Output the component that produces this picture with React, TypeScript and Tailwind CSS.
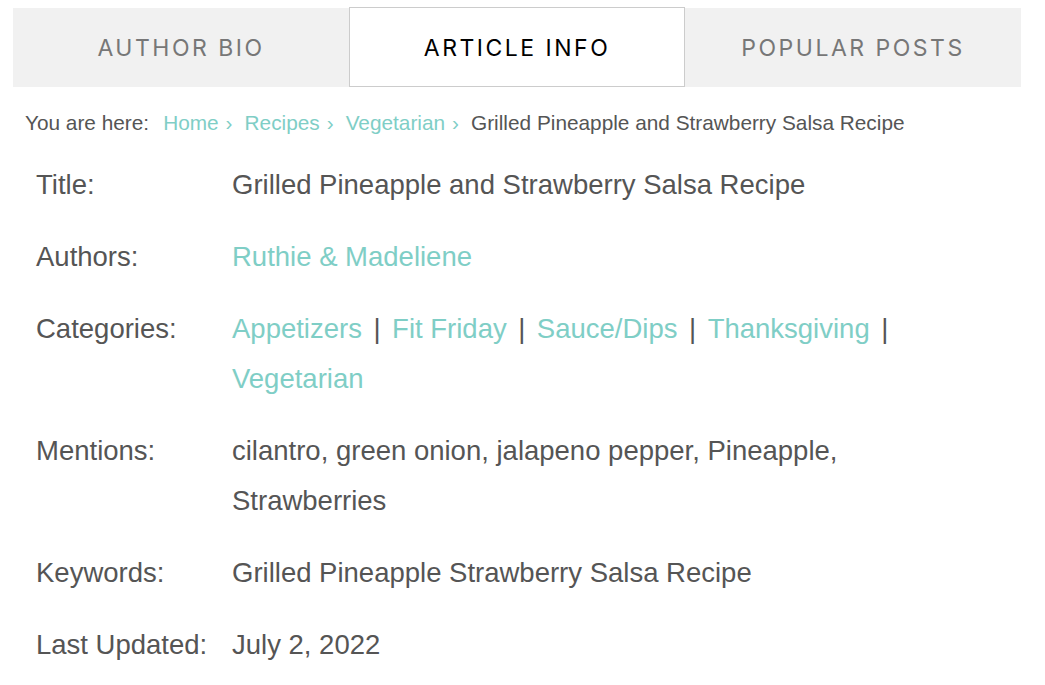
import React from 'react'

const tabs = ["Author Bio", "Article Info", "Popular Posts"];

const teal = "text-[#7fcec6]";

const categories = ["Appetizers", "Fit Friday", "Sauce/Dips", "Thanksgiving", "Vegetarian"];

export default function App() {
  const rows: { label: string; value: React.ReactNode }[] = [
    { label: "Title:", value: "Grilled Pineapple and Strawberry Salsa Recipe" },
    { label: "Authors:", value: <a className={teal}>Ruthie &amp; Madeliene</a> },
    {
      label: "Categories:",
      value: (
        <>
          {categories.map((c, i) => (
            <React.Fragment key={c}>
              <span className="whitespace-nowrap">
                <a className={teal}>{c}</a>
                {i < categories.length - 1 && <span className="px-[11.5px] text-[#555]">|</span>}
              </span>
              <wbr />
            </React.Fragment>
          ))}
        </>
      ),
    },
    { label: "Mentions:", value: "cilantro, green onion, jalapeno pepper, Pineapple, Strawberries" },
    { label: "Keywords:", value: "Grilled Pineapple Strawberry Salsa Recipe" },
    { label: "Last Updated:", value: "July 2, 2022" },
  ];

  return (
    <div className="w-[1045px] h-[685px] bg-white overflow-hidden pl-[13px] pr-[24px] pt-[8px] font-['Liberation_Sans',Arial,sans-serif]">
      {/* tabs */}
      <div className="grid grid-cols-3 bg-[#f1f1f1] h-[79px]">
        {tabs.map((t, i) => (
          <div
            key={t}
            className={`flex items-center justify-center pt-[2px] uppercase font-['Inter',sans-serif] text-[23px] tracking-[2.5px] ${
              i === 1
                ? "bg-white border border-[#cccccc] -mt-px h-[80px] text-black"
                : "text-[#777]"
            }`}
          >
            {t}
          </div>
        ))}
      </div>

      {/* breadcrumb */}
      <div className="pl-[12px] mt-[24px] text-[20.8px] leading-[24px] text-[#555] whitespace-nowrap">
        <span>You are here:</span>
        <span className="ml-[14px]">
          <a className={teal}>Home</a>
          <span className={`${teal} ml-[7px] mr-[12px]`}>›</span>
          <a className={teal}>Recipes</a>
          <span className={`${teal} ml-[7px] mr-[12px]`}>›</span>
          <a className={teal}>Vegetarian</a>
          <span className={`${teal} ml-[7px] mr-[12px]`}>›</span>
          <span>Grilled Pineapple and Strawberry Salsa Recipe</span>
        </span>
      </div>

      {/* article info */}
      <div className="mt-[14px] grid grid-cols-[196px_740px] pl-[23px] text-[27.5px] leading-[50px] text-[#555]">
        {rows.map((r) => (
          <React.Fragment key={r.label}>
            <div className="py-[11px]">{r.label}</div>
            <div className="py-[11px]">{r.value}</div>
          </React.Fragment>
        ))}
      </div>
    </div>
  );
}
